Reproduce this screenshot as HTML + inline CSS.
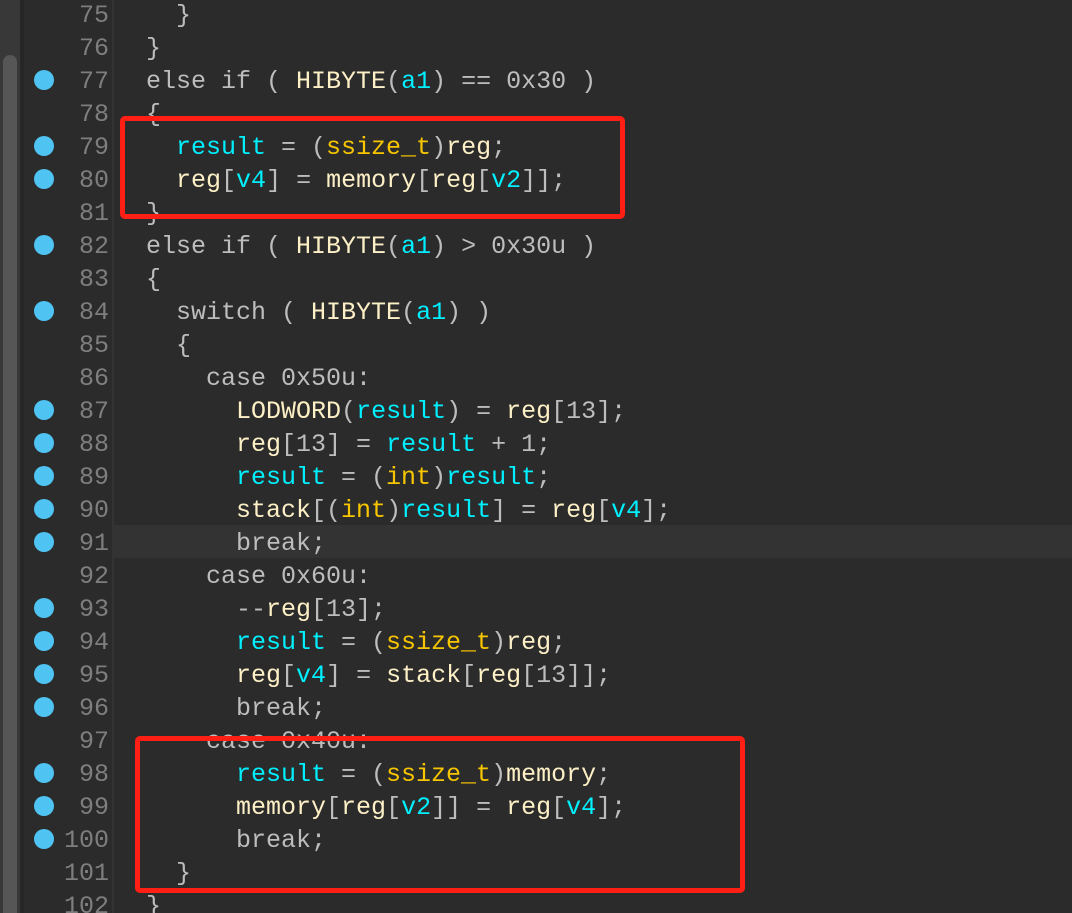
<!DOCTYPE html>
<html><head><meta charset="utf-8"><style>
html,body{margin:0;padding:0;width:1072px;height:913px;overflow:hidden;background:#2b2b2b;}
body{position:relative;font-family:"Liberation Mono",monospace;font-size:25px;}
.strip{position:absolute;left:0;top:0;width:20px;height:913px;background:#383838;}
.thumb{position:absolute;left:3px;top:55px;width:14px;height:870px;background:#565656;border-radius:7px;}
.sep{position:absolute;left:20px;top:0;width:4px;height:913px;background:#262626;}
.gborder{position:absolute;left:112px;top:0;width:2px;height:913px;background:#333;}
.hl{position:absolute;left:114px;top:525px;width:958px;height:33px;background:#333333;}
.rows{position:absolute;left:0;top:2px;width:1072px;height:913px;}
.row{position:absolute;left:0;height:33px;line-height:33px;white-space:pre;}
.num{position:absolute;left:40px;width:69px;text-align:right;color:#7e7e7e;}
.dot{position:absolute;left:34px;top:5px;width:20px;height:20px;border-radius:50%;background:#4fc3f2;}
.code{position:absolute;left:146px;color:#bdbdbd;}
.n{color:#fdf0c6}.c{color:#00f0ff}.t{color:#f7c600}
.box{position:absolute;border:5px solid #ff1f14;border-radius:5px;}
</style></head><body>
<div class="strip"></div><div class="thumb"></div><div class="sep"></div><div class="gborder"></div>
<div class="hl"></div>
<div class="rows">
<div class="row" style="top:-3px"><span class="num">75</span><span class="code">  }</span></div>
<div class="row" style="top:30px"><span class="num">76</span><span class="code">}</span></div>
<div class="row" style="top:63px"><span class="dot"></span><span class="num">77</span><span class="code">else if ( <span class="n">HIBYTE</span>(<span class="c">a1</span>) == 0x30 )</span></div>
<div class="row" style="top:96px"><span class="num">78</span><span class="code">{</span></div>
<div class="row" style="top:129px"><span class="dot"></span><span class="num">79</span><span class="code">  <span class="c">result</span> = (<span class="t">ssize_t</span>)<span class="n">reg</span>;</span></div>
<div class="row" style="top:162px"><span class="dot"></span><span class="num">80</span><span class="code">  <span class="n">reg</span>[<span class="c">v4</span>] = <span class="n">memory</span>[<span class="n">reg</span>[<span class="c">v2</span>]];</span></div>
<div class="row" style="top:195px"><span class="num">81</span><span class="code">}</span></div>
<div class="row" style="top:228px"><span class="dot"></span><span class="num">82</span><span class="code">else if ( <span class="n">HIBYTE</span>(<span class="c">a1</span>) &gt; 0x30u )</span></div>
<div class="row" style="top:261px"><span class="num">83</span><span class="code">{</span></div>
<div class="row" style="top:294px"><span class="dot"></span><span class="num">84</span><span class="code">  switch ( <span class="n">HIBYTE</span>(<span class="c">a1</span>) )</span></div>
<div class="row" style="top:327px"><span class="num">85</span><span class="code">  {</span></div>
<div class="row" style="top:360px"><span class="num">86</span><span class="code">    case 0x50u:</span></div>
<div class="row" style="top:393px"><span class="dot"></span><span class="num">87</span><span class="code">      <span class="n">LODWORD</span>(<span class="c">result</span>) = <span class="n">reg</span>[13];</span></div>
<div class="row" style="top:426px"><span class="dot"></span><span class="num">88</span><span class="code">      <span class="n">reg</span>[13] = <span class="c">result</span> + 1;</span></div>
<div class="row" style="top:459px"><span class="dot"></span><span class="num">89</span><span class="code">      <span class="c">result</span> = (<span class="t">int</span>)<span class="c">result</span>;</span></div>
<div class="row" style="top:492px"><span class="dot"></span><span class="num">90</span><span class="code">      <span class="n">stack</span>[(<span class="t">int</span>)<span class="c">result</span>] = <span class="n">reg</span>[<span class="c">v4</span>];</span></div>
<div class="row" style="top:525px"><span class="dot"></span><span class="num">91</span><span class="code">      break;</span></div>
<div class="row" style="top:558px"><span class="num">92</span><span class="code">    case 0x60u:</span></div>
<div class="row" style="top:591px"><span class="dot"></span><span class="num">93</span><span class="code">      --<span class="n">reg</span>[13];</span></div>
<div class="row" style="top:624px"><span class="dot"></span><span class="num">94</span><span class="code">      <span class="c">result</span> = (<span class="t">ssize_t</span>)<span class="n">reg</span>;</span></div>
<div class="row" style="top:657px"><span class="dot"></span><span class="num">95</span><span class="code">      <span class="n">reg</span>[<span class="c">v4</span>] = <span class="n">stack</span>[<span class="n">reg</span>[13]];</span></div>
<div class="row" style="top:690px"><span class="dot"></span><span class="num">96</span><span class="code">      break;</span></div>
<div class="row" style="top:723px"><span class="num">97</span><span class="code">    case 0x40u:</span></div>
<div class="row" style="top:756px"><span class="dot"></span><span class="num">98</span><span class="code">      <span class="c">result</span> = (<span class="t">ssize_t</span>)<span class="n">memory</span>;</span></div>
<div class="row" style="top:789px"><span class="dot"></span><span class="num">99</span><span class="code">      <span class="n">memory</span>[<span class="n">reg</span>[<span class="c">v2</span>]] = <span class="n">reg</span>[<span class="c">v4</span>];</span></div>
<div class="row" style="top:822px"><span class="dot"></span><span class="num">100</span><span class="code">      break;</span></div>
<div class="row" style="top:855px"><span class="num">101</span><span class="code">  }</span></div>
<div class="row" style="top:888px"><span class="num">102</span><span class="code">}</span></div>
</div>
<div class="box" style="left:120px;top:116px;width:495px;height:93px;"></div>
<div class="box" style="left:135px;top:736px;width:600px;height:147px;"></div>
</body></html>
